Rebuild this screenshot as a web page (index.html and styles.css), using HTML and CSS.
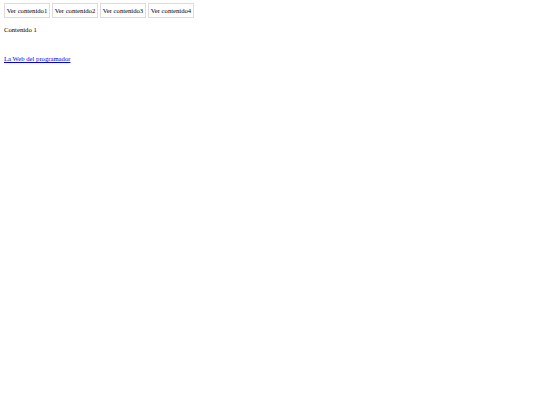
FILE: index.html
```html
<!DOCTYPE html>
<html>
<head>
<meta charset="utf-8">
<link rel="stylesheet" href="styles.css">
</head>
<body>
<div class="tabs">
  <div class="tab">Ver contenido1</div>
  <div class="tab">Ver contenido2</div>
  <div class="tab">Ver contenido3</div>
  <div class="tab">Ver contenido4</div>
</div>
<div class="content">Contenido 1</div>
<div class="footer"><a href="#">La Web del programador</a></div>
</body>
</html>
```

FILE: styles.css
```css
body {
  margin: 3px 4px;
  font-family: "Liberation Serif", serif;
  font-size: 6.67px;
  color: #000;
  background: #fff;
}
.tabs {
  display: flex;
  gap: 2px;
}
.tab {
  border: 1px solid #ddd;
  padding: 2.5px 1.75px;
  line-height: 8px;
}
.content {
  margin-top: 8px;
  line-height: 8px;
}
.footer {
  margin-top: 21px;
  line-height: 8px;
}
.footer a {
  color: #00e;
}
```
